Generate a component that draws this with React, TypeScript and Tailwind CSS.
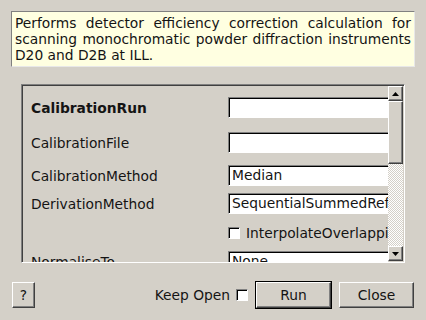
import React from "react";

const raised =
  "border border-t-white border-l-white border-b-[#404040] border-r-[#404040] shadow-[inset_-1px_-1px_0_#808080]";

const sunken =
  "border border-t-[#808080] border-l-[#808080] border-b-white border-r-white shadow-[inset_1px_1px_0_#000]";

// field with a sunken frame, wider than the visible area so the scrollbar clips it
const Field = ({ value }: { value?: string }) => (
  <div className={`h-[21px] w-[200px] shrink-0 bg-white ${sunken} pl-[3px] leading-[19px] whitespace-nowrap overflow-hidden`}>
    {value}
  </div>
);

const Arrow = ({ up }: { up?: boolean }) => (
  <svg width="7" height="4" viewBox="0 0 7 4">
    <path d={up ? "M0 4L3.5 0L7 4Z" : "M0 0L3.5 4L7 0Z"} fill="#000" />
  </svg>
);

const App = () => {
  return (
    <div className="w-[426px] h-[320px] bg-[#d4d0c8] text-[13.8px] leading-[16px] text-[#141414] font-['DejaVu_Sans',sans-serif] overflow-hidden flex flex-col pt-[11px]">
      {/* description */}
      <div className="ml-[11px] w-[404px] h-[56px] shrink-0 bg-[#ffffe1] border border-t-[#808080] border-l-[#808080] border-b-[#e8e8e8] border-r-[#e8e8e8] px-[3px] pt-[3px] text-justify">
        Performs detector efficiency correction calculation for scanning monochromatic powder diffraction instruments D20 and D2B at ILL.
      </div>

      {/* property list */}
      <div className="ml-[21px] mt-[17px] w-[384px] h-[179px] shrink-0 border border-t-[#808080] border-l-[#808080] border-b-white border-r-white shadow-[inset_1px_1px_0_#404040] flex overflow-hidden">
        <div className="flex-1 overflow-hidden flex flex-col pl-[9px] pt-[12px]">
          <div className="flex items-center h-[21px] shrink-0">
            <span className="w-[197px] shrink-0 font-bold">CalibrationRun</span>
            <Field />
          </div>
          <div className="flex items-center h-[21px] shrink-0 mt-[14px]">
            <span className="w-[197px] shrink-0">CalibrationFile</span>
            <Field />
          </div>
          <div className="flex items-center h-[21px] shrink-0 mt-[12px]">
            <span className="w-[197px] shrink-0">CalibrationMethod</span>
            <Field value="Median" />
          </div>
          <div className="flex items-center h-[21px] shrink-0 mt-[7px]">
            <span className="w-[197px] shrink-0">DerivationMethod</span>
            <Field value="SequentialSummedReference" />
          </div>
          <div className="flex items-center h-[21px] shrink-0 mt-[8px]">
            <span className="w-[197px] shrink-0" />
            <span className={`w-[12px] h-[12px] bg-white ${sunken} shrink-0`} />
            <span className="ml-[6px] whitespace-nowrap">InterpolateOverlapping</span>
          </div>
          <div className="flex items-center h-[21px] shrink-0 mt-[8px]">
            <span className="w-[197px] shrink-0">NormaliseTo</span>
            <Field value="None" />
          </div>
        </div>

        {/* scrollbar */}
        <div className="w-[15px] shrink-0 mt-[1px] mb-[1px] mr-[1px] flex flex-col">
          <div className={`h-[15px] shrink-0 bg-[#d4d0c8] ${raised} flex items-center justify-center`}>
            <Arrow up />
          </div>
          <div className={`h-[63px] shrink-0 bg-[#d4d0c8] ${raised}`} />
          <div className="flex-1 bg-[repeating-conic-gradient(#ffffff_0_25%,#d4d0c8_0_50%)] bg-[length:2px_2px]" />
          <div className={`h-[15px] shrink-0 bg-[#d4d0c8] ${raised} flex items-center justify-center`}>
            <Arrow />
          </div>
        </div>
      </div>

      {/* buttons */}
      <div className="flex items-center mt-[18px] pl-[12px]">
        <button className={`w-[23px] h-[26px] ${raised}`}>?</button>
        <span className="ml-auto">Keep Open</span>
        <span className={`ml-[6px] w-[12px] h-[12px] bg-white ${sunken}`} />
        <button className="ml-[7px] w-[77px] h-[28px] border border-black flex">
          <span className={`flex-1 ${raised} flex items-center justify-center`}>Run</span>
        </button>
        <button className={`ml-[7px] mr-[12px] w-[75px] h-[26px] ${raised}`}>Close</button>
      </div>
    </div>
  );
};

export default App;
